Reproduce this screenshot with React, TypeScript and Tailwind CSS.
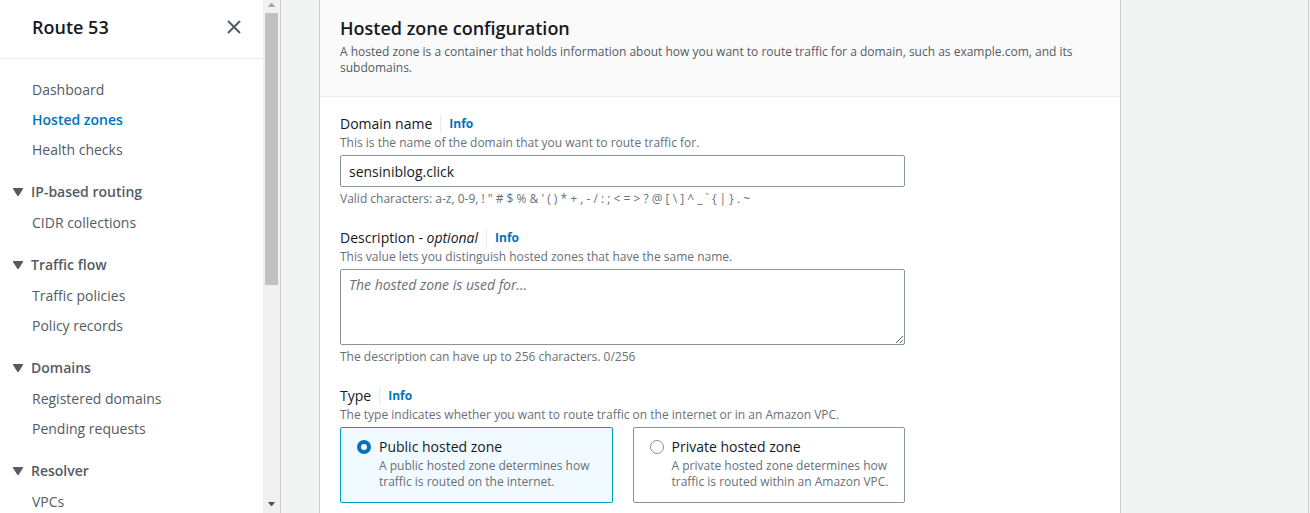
import { useState, type ReactNode } from "react";

type Section = { title: string; items: string[] };

const topLinks = ["Dashboard", "Hosted zones", "Health checks"];

const sections: Section[] = [
  { title: "IP-based routing", items: ["CIDR collections"] },
  { title: "Traffic flow", items: ["Traffic policies", "Policy records"] },
  { title: "Domains", items: ["Registered domains", "Pending requests"] },
  { title: "Resolver", items: ["VPCs"] },
];

const zoneTypes = [
  {
    id: "public",
    title: "Public hosted zone",
    text: "A public hosted zone determines how traffic is routed on the internet.",
  },
  {
    id: "private",
    title: "Private hosted zone",
    text: "A private hosted zone determines how traffic is routed within an Amazon VPC.",
  },
];

function NavLink({ text, active = false }: { text: string; active?: boolean }) {
  return (
    <li>
      <a
        href="#"
        className={
          active
            ? "block text-sm leading-5 font-semibold text-[#0073bb]"
            : "block text-sm leading-5 text-[#545b64]"
        }
      >
        {text}
      </a>
    </li>
  );
}

function NavSection({ title, items }: Section) {
  const [open, setOpen] = useState(true);
  return (
    <section className="mt-[22px]">
      <button
        type="button"
        aria-expanded={open}
        onClick={() => setOpen(!open)}
        className="flex items-center gap-2 pl-[13px] text-sm leading-5 font-semibold text-[#545b64]"
      >
        <svg viewBox="0 0 10 8" className={open ? "h-2 w-2.5" : "h-2 w-2.5 -rotate-90"} fill="#545b64">
          <path d="M0 0h10v1L5.5 8h-1L0 1z" />
        </svg>
        {title}
      </button>
      {open && (
        <ul className="mt-[11px] flex flex-col gap-2.5 pl-8">
          {items.map((item) => (
            <NavLink key={item} text={item} />
          ))}
        </ul>
      )}
    </section>
  );
}

function ScrollTrack() {
  return (
    <div aria-hidden="true" className="flex w-[17px] shrink-0 flex-col items-center bg-[#f1f1f1]">
      <svg viewBox="0 0 17 13" className="h-[13px] w-full shrink-0" fill="#a3a3a3">
        <path d="M5 7L8 3h1l3 4z" />
      </svg>
      <div className="h-[53%] w-[13px] bg-[#c1c1c1]" />
      <svg viewBox="0 0 17 17" className="mt-auto h-[17px] w-full shrink-0" fill="#505050">
        <path d="M5 6h7l-3 4H8z" />
      </svg>
    </div>
  );
}

function Sidebar() {
  return (
    <aside className="flex w-[281px] shrink-0 border-r border-[#c8cccc] bg-white">
      <div className="min-w-0 flex-1 overflow-hidden">
        <div className="flex items-center justify-between border-b border-[#eaeded] pt-4 pr-[22px] pb-5 pl-8">
          <h2 className="text-lg leading-[22px] font-semibold text-[#16191f]">Route 53</h2>
          <button type="button" aria-label="Close navigation" className="flex">
            <svg viewBox="0 0 14 14" className="h-3.5 w-3.5" stroke="#545b64" strokeWidth="2" fill="none">
              <path d="M1 1l12 12M13 1L1 13" />
            </svg>
          </button>
        </div>
        <nav className="pt-[21px]">
          <ul className="flex flex-col gap-2.5 pl-8">
            {topLinks.map((text) => (
              <NavLink key={text} text={text} active={text === "Hosted zones"} />
            ))}
          </ul>
          {sections.map((section) => (
            <NavSection key={section.title} {...section} />
          ))}
        </nav>
      </div>
      <ScrollTrack />
    </aside>
  );
}

function FieldLabel({ children }: { children: ReactNode }) {
  return (
    <div className="flex h-[22px] items-center gap-2 text-sm text-[#16191f]">
      {children}
      <a
        href="#"
        className="flex h-[18px] items-center border-l border-[#eaeded] pl-2 text-xs font-bold text-[#0073bb]"
      >
        Info
      </a>
    </div>
  );
}

function Hint({ children, id }: { children: ReactNode; id?: string }) {
  return (
    <p id={id} className="text-xs leading-4 text-[#687078]">
      {children}
    </p>
  );
}

export default function App() {
  const [domain, setDomain] = useState("sensiniblog.click");
  const [description, setDescription] = useState("");
  const [type, setType] = useState("public");

  return (
    <div className="flex h-screen overflow-hidden bg-[#f2f3f3] font-['Open_Sans','Noto_Sans',sans-serif]">
      <Sidebar />
      <main className="mr-px min-w-0 flex-1 overflow-hidden border-r border-[#c8cccc] pl-[38px]">
        <form className="min-h-full max-w-[802px] border-x border-[#c8cccc] bg-white">
          <header className="border-b border-[#eaeded] bg-[#fafafa] px-5 pt-4 pb-5">
            <h1 className="text-lg leading-6 font-semibold text-[#16191f]">Hosted zone configuration</h1>
            <p className="mt-1 text-xs leading-4 text-[#545b64]">
              A hosted zone is a container that holds information about how you want to route traffic for a domain, such as
              example.com, and its subdomains.
            </p>
          </header>
          <div className="flex max-w-[605px] flex-col gap-5 px-5 py-4">
            <div>
              <FieldLabel>
                <label htmlFor="domain">Domain name</label>
              </FieldLabel>
              <Hint>This is the name of the domain that you want to route traffic for.</Hint>
              <input
                id="domain"
                type="text"
                value={domain}
                onChange={(e) => setDomain(e.target.value)}
                aria-describedby="domain-hint"
                className="my-1 block h-8 w-full rounded-xs border border-[#879596] bg-white px-2 text-sm text-[#16191f]"
              />
              <Hint id="domain-hint">
                {"Valid characters: a-z, 0-9, ! \" # $ % & ' ( ) * + , - / : ; < = > ? @ [ \\ ] ^ _ ` { | } . ~"}
              </Hint>
            </div>
            <div>
              <FieldLabel>
                <label htmlFor="description">
                  Description - <i>optional</i>
                </label>
              </FieldLabel>
              <Hint>This value lets you distinguish hosted zones that have the same name.</Hint>
              <textarea
                id="description"
                value={description}
                maxLength={256}
                onChange={(e) => setDescription(e.target.value)}
                placeholder="The hosted zone is used for..."
                aria-describedby="description-hint"
                className="my-1 block h-[76px] w-full resize rounded-xs border border-[#879596] bg-white px-2 py-1 text-sm leading-[22px] text-[#16191f] placeholder:text-[#687078] placeholder:italic"
              />
              <Hint id="description-hint">The description can have up to 256 characters. {description.length}/256</Hint>
            </div>
            <div role="radiogroup" aria-labelledby="type-label">
              <FieldLabel>
                <span id="type-label">Type</span>
              </FieldLabel>
              <Hint>The type indicates whether you want to route traffic on the internet or in an Amazon VPC.</Hint>
              <div className="mt-1 grid grid-cols-2 gap-5">
                {zoneTypes.map((zone) => (
                  <label
                    key={zone.id}
                    className={
                      type === zone.id
                        ? "flex gap-2 rounded-xs border border-[#00a1c9] bg-[#f1faff] pt-2 pr-2 pb-3 pl-4"
                        : "flex gap-2 rounded-xs border border-[#879596] bg-white pt-2 pr-2 pb-3 pl-4"
                    }
                  >
                    <input
                      type="radio"
                      name="type"
                      value={zone.id}
                      checked={type === zone.id}
                      onChange={() => setType(zone.id)}
                      className="mt-1 h-3.5 w-3.5 shrink-0 appearance-none rounded-full border border-[#879596] bg-white checked:border-4 checked:border-[#0073bb]"
                    />
                    <span className="min-w-0">
                      <span className="block text-sm leading-[22px] text-[#16191f]">{zone.title}</span>
                      <span className="block text-xs leading-4 text-[#687078]">{zone.text}</span>
                    </span>
                  </label>
                ))}
              </div>
            </div>
          </div>
        </form>
      </main>
    </div>
  );
}
